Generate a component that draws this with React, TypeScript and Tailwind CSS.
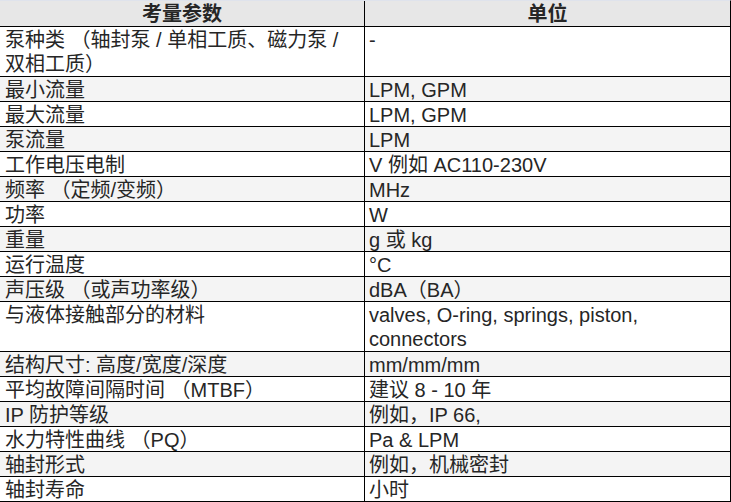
import React from "react";

type Row = { l: React.ReactNode; r: React.ReactNode; tall?: boolean };

const rows: Row[] = [
  { l: <>泵种类 （轴封泵 / 单相工质、磁力泵 /<br />双相工质）</>, r: "-", tall: true },
  { l: "最小流量", r: "LPM, GPM" },
  { l: "最大流量", r: "LPM, GPM" },
  { l: "泵流量", r: "LPM" },
  { l: "工作电压电制", r: "V 例如 AC110-230V" },
  { l: "频率 （定频/变频）", r: "MHz" },
  { l: "功率", r: "W" },
  { l: "重量", r: "g 或 kg" },
  { l: "运行温度", r: "°C" },
  { l: "声压级 （或声功率级）", r: "dBA（BA）" },
  { l: "与液体接触部分的材料", r: <>valves, O-ring, springs, piston,<br />connectors</>, tall: true },
  { l: "结构尺寸: 高度/宽度/深度", r: "mm/mm/mm" },
  { l: "平均故障间隔时间 （MTBF）", r: "建议 8 - 10 年" },
  { l: "IP 防护等级", r: "例如，IP 66," },
  { l: "水力特性曲线 （PQ）", r: "Pa & LPM" },
  { l: "轴封形式", r: "例如，机械密封" },
  { l: "轴封寿命", r: "小时" },
];

export default function App() {
  return (
    <div
      className="w-[731px] h-[502px] bg-white overflow-hidden text-[20px] leading-[24px] text-[#262626]"
      style={{ fontFamily: '"Liberation Sans", "Noto Sans CJK SC", sans-serif' }}
    >
      <div className="w-[731px] border-t border-[#dfe3ec] border-r border-r-black">
        <div className="grid grid-cols-[365px_1fr] h-[26px] bg-[#e7e7e7] border-b border-black font-bold">
          <div className="flex items-center justify-center border-r border-black">考量参数</div>
          <div className="flex items-center justify-center">单位</div>
        </div>
        {rows.map((row, i) => (
          <div
            key={i}
            className={
              "grid grid-cols-[365px_1fr] border-b border-black " +
              (row.tall ? "h-[50px] " : "h-[25px] ") +
              (i % 2 === 1 ? "bg-[#f4f4f4]" : "bg-white")
            }
          >
            <div className="border-r border-black pl-[5px] pt-[1px]">{row.l}</div>
            <div className="pl-[4px] pt-[1px]">{row.r}</div>
          </div>
        ))}
      </div>
    </div>
  );
}
